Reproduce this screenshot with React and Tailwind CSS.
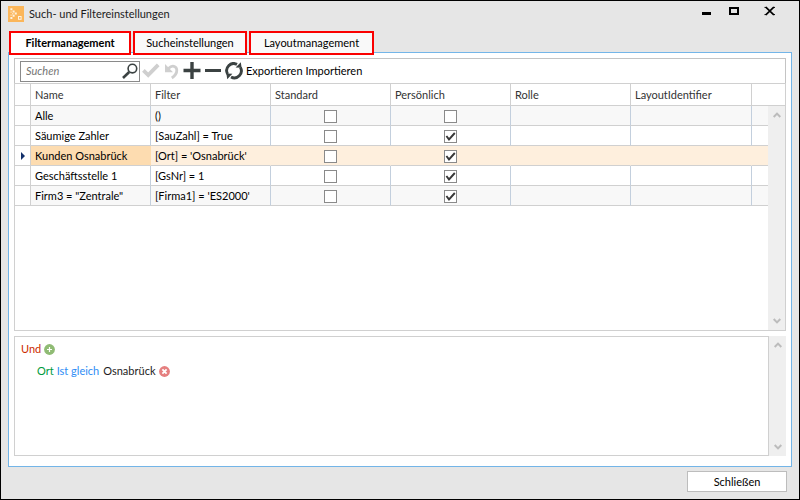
import React, { useState } from "react";

const FILTERS = [
  { name: "Alle", filter: "()", standard: false, personal: false },
  { name: "Säumige Zahler", filter: "[SauZahl] = True", standard: false, personal: true },
  { name: "Kunden Osnabrück", filter: "[Ort] = 'Osnabrück'", standard: false, personal: true },
  { name: "Geschäftsstelle 1", filter: "[GsNr] = 1", standard: false, personal: true },
  { name: 'Firm3 = "Zentrale"', filter: "[Firma1] = 'ES2000'", standard: false, personal: true },
];

const COLUMNS = ["Name", "Filter", "Standard", "Persönlich", "Rolle", "LayoutIdentifier"];

function Logo() {
  return (
    <svg className="h-4 w-4" viewBox="0 0 16 16" aria-hidden="true">
      <rect width="16" height="16" fill="#fbb65a" />
      <g fill="#fff3df">
        <path d="M2.4 2.2h2v2h-2zM4.6 4.4h2v2h-2zM6.8 6.6h2v2h-2zM4.6 8.8h2v2h-2zM2.4 11h2v2h-2z" />
        <path d="M2.4 5.4h1.4v1.4H2.4zM4 7h1.4v1.4H4zM2.4 8.4h1.4v1.4H2.4z" opacity=".7" />
      </g>
      <rect x="10.5" y="10.5" width="2.6" height="2.8" fill="none" stroke="#fff3df" />
    </svg>
  );
}

function Chevron({ up }) {
  return (
    <svg className="h-2 w-2" viewBox="0 0 8 8" fill="none" stroke="#bcbcbc" strokeWidth="2" aria-hidden="true">
      <path d={up ? "M.7 6 4 2.6 7.3 6" : "M.7 2 4 5.4 7.3 2"} />
    </svg>
  );
}

function ScrollBar({ className }) {
  return (
    <div className={"flex w-[17px] flex-col items-center justify-between bg-[#efefef] py-[5px] " + className}>
      <button type="button" aria-label="Nach oben"><Chevron up /></button>
      <button type="button" aria-label="Nach unten"><Chevron /></button>
    </div>
  );
}

function CheckBox({ label, defaultChecked }) {
  return (
    <label className="mx-auto grid h-[13px] w-[13px]">
      <input
        type="checkbox"
        aria-label={label}
        defaultChecked={defaultChecked}
        className="peer col-start-1 row-start-1 h-[13px] w-[13px] appearance-none border border-[#8a8a8a] bg-white"
      />
      <svg
        className="pointer-events-none invisible col-start-1 row-start-1 h-[13px] w-[13px] peer-checked:visible"
        viewBox="0 0 13 13"
        fill="none"
        stroke="#383838"
        strokeWidth="1.9"
        aria-hidden="true"
      >
        <path d="M2.4 6 5 9.4 10.8 3" />
      </svg>
    </label>
  );
}

function Tab({ active, onClick, className, children }) {
  return (
    <button
      type="button"
      role="tab"
      aria-selected={active}
      onClick={onClick}
      className={
        "h-6 border-2 border-[#fa0000] text-center text-black " +
        (active ? "bg-white font-bold " : "bg-[#f9f9f9] ") +
        className
      }
    >
      {children}
    </button>
  );
}

export default function App() {
  const [tab, setTab] = useState(0);
  const [selected, setSelected] = useState(2);

  return (
    <div className="flex h-screen flex-col border border-black bg-[#e6e6e6] font-['Lato','Open_Sans',sans-serif] text-[11px] leading-4 text-[#1c1c1c]">
      <header className="flex h-[30px] items-start justify-between pt-[5px] pr-[23px] pl-[7px]">
        <div className="flex items-center gap-[5px]">
          <Logo />
          <h1>Such- und Filtereinstellungen</h1>
        </div>
        <div className="flex text-black">
          <button type="button" aria-label="Minimieren">
            <svg className="h-3 w-3" viewBox="0 0 12 12"><path d="M2 6h9v3H2z" /></svg>
          </button>
          <button type="button" aria-label="Maximieren" className="ml-4">
            <svg className="h-3 w-3" viewBox="0 0 12 12"><path d="M1 1h10v8H1zM3 3v4h6V3z" fillRule="evenodd" /></svg>
          </button>
          <button type="button" aria-label="Fenster schließen" className="ml-6">
            <svg className="h-3 w-3" viewBox="0 0 12 12" fill="none" stroke="#000">
              <path d="M1.8 1.2 9.8 8.8M9.8 1.2 1.8 8.8" strokeWidth="1.7" />
              <path d="M.5 1.4h2M9 1.4h2M.5 8.6h2M9 8.6h2" />
            </svg>
          </button>
        </div>
      </header>

      <div role="tablist" className="relative z-10 -mb-[3px] flex gap-0.5 px-2">
        <Tab active={tab === 0} onClick={() => setTab(0)} className="w-[122px]">Filtermanagement</Tab>
        <Tab active={tab === 1} onClick={() => setTab(1)} className="w-[114px]">Sucheinstellungen</Tab>
        <Tab active={tab === 2} onClick={() => setTab(2)} className="w-[125px]">Layoutmanagement</Tab>
      </div>

      <main className="mx-[7px] flex min-h-0 flex-1 flex-col border border-[#73b5e8] bg-white px-[5px] pt-[5px] pb-[10px]">
        <div className="flex h-[25px] shrink-0 items-center border border-b-0 border-[#c4c4c4] pl-[5px] text-black">
          <div className="flex h-[21px] w-[120px] items-center border border-[#8a8a8a] bg-white pr-px">
            <input
              type="text"
              aria-label="Suchen"
              placeholder="Suchen"
              className="min-w-0 flex-1 pl-[5px] italic outline-none placeholder:text-[#757575]"
            />
            <button type="button" aria-label="Suche starten">
              <svg className="h-4 w-4" viewBox="0 0 16 16" fill="none" stroke="#3b4242">
                <circle cx="10.4" cy="5.6" r="4.3" strokeWidth="1.6" />
                <path d="M7.2 9 1 15" strokeWidth="2.6" />
              </svg>
            </button>
          </div>
          <button type="button" aria-label="Übernehmen" className="ml-0.5">
            <svg className="h-[18px] w-[18px]" viewBox="0 0 18 18" fill="none" stroke="#cfcfcf" strokeWidth="3.8">
              <path d="M1.4 8.4 6.2 13 16.2 2.8" />
            </svg>
          </button>
          <button type="button" aria-label="Rückgängig" className="ml-[3px]">
            <svg className="h-[18px] w-[18px]" viewBox="0 0 18 18" fill="none" stroke="#cfcfcf">
              <path d="M5.6 6.4C9 2.6 13.6 4 13.8 8c.1 3.4-2 6-5 8" strokeWidth="2.8" />
              <path d="M2 2v8.2h8z" fill="#cfcfcf" stroke="none" />
            </svg>
          </button>
          <button type="button" aria-label="Hinzufügen" className="ml-0.5">
            <svg className="h-[18px] w-[18px]" viewBox="0 0 18 18" stroke="#3b4242" strokeWidth="3.4">
              <path d="M.5 8.5h17M9 0v17" />
            </svg>
          </button>
          <button type="button" aria-label="Entfernen" className="ml-[3px]">
            <svg className="h-[18px] w-[18px]" viewBox="0 0 18 18" stroke="#3b4242" strokeWidth="3">
              <path d="M1 8.5h16" />
            </svg>
          </button>
          <button type="button" aria-label="Aktualisieren" className="ml-[3px]">
            <svg className="h-[18px] w-[18px]" viewBox="0 0 18 18" fill="none" stroke="#3b4242" strokeWidth="2.9">
              <path d="M2.6 12A7 7 0 0 1 12 2.4M15.4 5.4A7 7 0 0 1 6 15" />
              <path d="M10.6 5.6 16.6 5.8 15.8.2zM7.4 11.8 1.4 11.6 2.2 17.2z" fill="#3b4242" stroke="none" />
            </svg>
          </button>
          <button type="button" className="ml-[3px]">Exportieren</button>
          <button type="button" className="ml-[3px]">Importieren</button>
        </div>

        <div className="relative min-h-0 flex-1 overflow-hidden border border-[#d0d0d0]">
          <table className="w-full table-fixed border-separate border-spacing-0 text-left">
            <colgroup>
              <col className="w-4" />
              <col className="w-[120px]" />
              <col className="w-[120px]" />
              <col className="w-[120px]" />
              <col className="w-[120px]" />
              <col className="w-[120px]" />
              <col className="w-[121px]" />
              <col />
            </colgroup>
            <thead>
              <tr className="h-[22px]">
                <th className="border-r border-b border-[#d0d0d0] p-0" />
                {COLUMNS.map((c) => (
                  <th key={c} className="border-r border-b border-[#d0d0d0] px-1 py-0 font-normal text-[#333]">{c}</th>
                ))}
                <th className="border-b border-[#d0d0d0] p-0" />
              </tr>
            </thead>
            <tbody>
              {FILTERS.map((f, i) => {
                const on = i === selected;
                const bg = on ? "bg-[#feefdd]" : i % 2 === 0 ? "bg-[#f8f8f8]" : "bg-white";
                const line = on ? "border-r-[#feefdd]" : "border-r-[#c3cfdd]";
                const cell = "border-r border-b border-b-[#d0d0d0] py-0 " + bg + " " + line;
                return (
                  <tr key={f.name} className="h-5 text-black" onClick={() => setSelected(i)}>
                    <td className="border-r border-b border-[#d0d0d0] bg-white p-0">
                      {on && (
                        <svg className="ml-1.5 h-2 w-1" viewBox="0 0 4 8" fill="#12306b" aria-hidden="true">
                          <path d="M0 0 4 4 0 8z" />
                        </svg>
                      )}
                    </td>
                    <td className={on ? "border-r border-b border-r-[#fddcb0] border-b-[#d0d0d0] bg-[#fddcb0] px-1 py-0" : cell + " px-1"}>{f.name}</td>
                    <td className={cell + " px-1"}>{f.filter}</td>
                    <td className={cell + " px-0 pt-px"}><CheckBox label={f.name + " Standard"} defaultChecked={f.standard} /></td>
                    <td className={cell + " px-0 pt-px"}><CheckBox label={f.name + " Persönlich"} defaultChecked={f.personal} /></td>
                    <td className={cell + " px-0"} />
                    <td className={cell + " px-0"} />
                    <td className={"border-b border-[#d0d0d0] p-0 " + bg} />
                  </tr>
                );
              })}
            </tbody>
          </table>
          <ScrollBar className="absolute top-[22px] right-0 bottom-0" />
        </div>

        <section className="mt-[5px] flex h-[120px] shrink-0">
          <div className="flex flex-1 flex-col gap-1.5 border border-[#d0d0d0] px-1.5 pt-1">
            <div className="flex items-center gap-[3px]">
              <button type="button" className="text-[#cc2c00]">Und</button>
              <button type="button" aria-label="Bedingung hinzufügen">
                <svg className="h-[11px] w-[11px]" viewBox="0 0 11 11">
                  <circle cx="5.5" cy="5.5" r="5.4" fill="#8fbb74" />
                  <path d="M5.5 3v5M3 5.5h5" stroke="#fff" strokeWidth="1.2" />
                </svg>
              </button>
            </div>
            <div className="flex items-center gap-[3px] pl-4">
              <button type="button" className="text-[#009a3c]">Ort</button>
              <button type="button" className="text-[#2f8df5]">Ist gleich</button>
              <button type="button" className="ml-px">Osnabrück</button>
              <button type="button" aria-label="Bedingung entfernen" className="ml-px">
                <svg className="h-[11px] w-[11px]" viewBox="0 0 11 11">
                  <circle cx="5.5" cy="5.5" r="5.4" fill="#e57f7f" />
                  <path d="M3.4 3.4l4.2 4.2M7.6 3.4 3.4 7.6" stroke="#fff" strokeWidth="1.8" />
                </svg>
              </button>
            </div>
          </div>
          <ScrollBar className="" />
        </section>
      </main>

      <footer className="flex justify-end pt-1 pr-3 pb-[7px]">
        <button type="button" className="h-[21px] w-[100px] border border-[#bdbdbd] bg-white text-center text-black">Schließen</button>
      </footer>
    </div>
  );
}
